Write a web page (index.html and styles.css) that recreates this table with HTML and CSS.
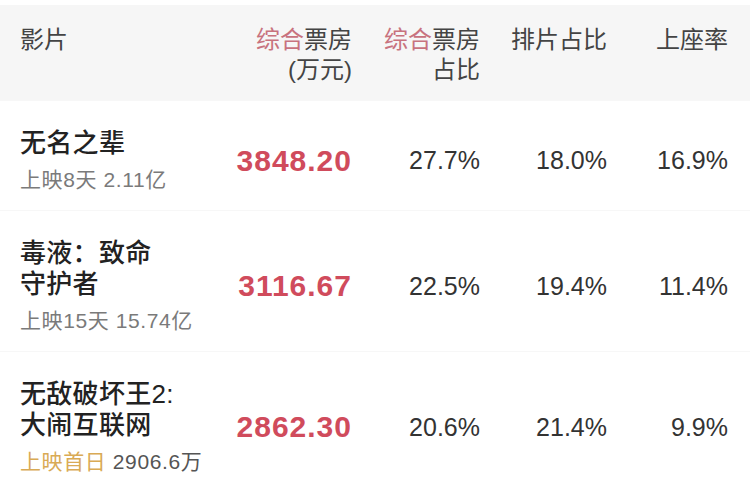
FILE: index.html
```html
<!DOCTYPE html>
<html lang="zh-CN">
<head>
<meta charset="utf-8">
<title>票房</title>
<link rel="stylesheet" href="styles.css">
</head>
<body>
<div class="board">
  <div class="row head">
    <div class="cell name-col">影片</div>
    <div class="cell num-col"><span class="hl">综合</span>票房<br>(万元)</div>
    <div class="cell num-col"><span class="hl">综合</span>票房<br>占比</div>
    <div class="cell num-col">排片占比</div>
    <div class="cell num-col">上座率</div>
  </div>

  <div class="row">
    <div class="cell name-col">
      <div class="title">无名之辈</div>
      <div class="sub">上映8天 2.11亿</div>
    </div>
    <div class="cell num-col money">3848.20</div>
    <div class="cell num-col pct">27.7%</div>
    <div class="cell num-col pct">18.0%</div>
    <div class="cell num-col pct">16.9%</div>
  </div>

  <div class="row">
    <div class="cell name-col">
      <div class="title">毒液：致命<br>守护者</div>
      <div class="sub">上映15天 15.74亿</div>
    </div>
    <div class="cell num-col money">3116.67</div>
    <div class="cell num-col pct">22.5%</div>
    <div class="cell num-col pct">19.4%</div>
    <div class="cell num-col pct">11.4%</div>
  </div>

  <div class="row">
    <div class="cell name-col">
      <div class="title">无敌破坏王2:<br>大闹互联网</div>
      <div class="sub"><span class="first">上映首日</span> <span class="dark">2906.6万</span></div>
    </div>
    <div class="cell num-col money">2862.30</div>
    <div class="cell num-col pct">20.6%</div>
    <div class="cell num-col pct">21.4%</div>
    <div class="cell num-col pct">9.9%</div>
  </div>
</div>
</body>
</html>
```

FILE: styles.css
```css
html, body {
  margin: 0;
  padding: 0;
  background: #ffffff;
}

body {
  font-family: "Liberation Sans", "Noto Sans CJK SC", sans-serif;
  color: #333;
  width: 750px;
  height: 486px;
  overflow: hidden;
}

.board {
  padding-top: 5px;
}

.row {
  display: grid;
  grid-template-columns: 200px 132px 128px 127px 121px;
  padding: 27px 22px 17px 20px;
  align-items: center;
}

.row + .row {
  border-top: 1px solid #f7f7f7;
}

.row.head {
  background: #f6f6f6;
  align-items: start;
  padding-top: 20px;
  padding-bottom: 15px;
  font-size: 24px;
  line-height: 30px;
  color: #444;
}

.head .hl {
  color: #c8727e;
}

.num-col {
  text-align: right;
}

.title {
  font-size: 26px;
  line-height: 31px;
  color: #222;
  font-weight: 500;
  letter-spacing: 0.3px;
}

.sub {
  margin-top: 8px;
  font-size: 21px;
  line-height: 26px;
  color: #7a7a7a;
  letter-spacing: 0.6px;
}

.sub .first {
  color: #d9aa55;
}

.sub .dark {
  color: #555;
}

.money {
  font-size: 30px;
  font-weight: bold;
  letter-spacing: 1px;
  color: #d04b5c;
}

.pct {
  font-size: 25px;
  color: #333;
}
```
